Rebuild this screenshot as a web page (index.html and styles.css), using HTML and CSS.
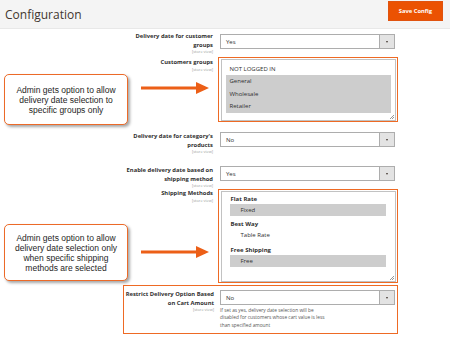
FILE: index.html
```html
<!DOCTYPE html>
<html lang="en">
<head>
    <meta charset="UTF-8">
    <meta name="viewport" content="width=device-width, initial-scale=1.0">
    <title>Configuration</title>
    <link rel="stylesheet" href="styles.css">
</head>
<body>
    <div class="page">
        <header class="page-header">
            <h1>Configuration</h1>
            <button class="btn-save">Save Config</button>
        </header>

        <div class="fields">
            <div class="field field-groups-date">
                <div class="label">Delivery date for customer groups<span class="scope">[store view]</span></div>
                <div class="control">
                    <div class="select">Yes<span class="select-arrow"></span></div>
                </div>
            </div>

            <div class="field field-groups">
                <div class="label">Customers groups<span class="scope">[store view]</span></div>
                <div class="control highlight">
                    <div class="multiselect">
                        <div class="option">NOT LOGGED IN</div>
                        <div class="selected-block">
                            <div class="option">General</div>
                            <div class="option">Wholesale</div>
                            <div class="option">Retailer</div>
                        </div>
                        <span class="resize"></span>
                    </div>
                </div>
            </div>

            <div class="field field-category">
                <div class="label">Delivery date for category's products<span class="scope">[store view]</span></div>
                <div class="control">
                    <div class="select">No<span class="select-arrow"></span></div>
                </div>
            </div>

            <div class="field field-shipping-date">
                <div class="label">Enable delivery date based on shipping method<span class="scope">[store view]</span></div>
                <div class="control">
                    <div class="select">Yes<span class="select-arrow"></span></div>
                </div>
            </div>

            <div class="field field-shipping">
                <div class="label">Shipping Methods<span class="scope">[store view]</span></div>
                <div class="control highlight">
                    <div class="multiselect multiselect-shipping">
                        <div class="optgroup">Flat Rate</div>
                        <div class="option sub selected">Fixed</div>
                        <div class="optgroup">Best Way</div>
                        <div class="option sub">Table Rate</div>
                        <div class="optgroup">Free Shipping</div>
                        <div class="option sub selected">Free</div>
                        <span class="resize"></span>
                    </div>
                </div>
            </div>

            <div class="field field-cart highlight">
                <div class="label">Restrict Delivery Option Based on Cart Amount<span class="scope">[store view]</span></div>
                <div class="control">
                    <div class="select">No<span class="select-arrow"></span></div>
                    <p class="note-text">If set as yes, delivery date selection will be disabled for customers whose cart value is less than specified amount</p>
                </div>
            </div>
        </div>

        <div class="callout callout-groups">Admin gets option to allow delivery date selection to specific groups only</div>
        <svg class="arrow arrow-groups" width="70" height="14" viewBox="0 0 70 14">
            <path d="M0 5.5 H55 V1 L68 7 L55 13 V8.5 H0 Z" fill="#ec5f17"/>
        </svg>

        <div class="callout callout-shipping">Admin gets option to allow delivery date selection only when specific shipping methods are selected</div>
        <svg class="arrow arrow-shipping" width="70" height="14" viewBox="0 0 70 14">
            <path d="M0 5.5 H55 V1 L68 7 L55 13 V8.5 H0 Z" fill="#ec5f17"/>
        </svg>
    </div>
</body>
</html>
```

FILE: styles.css
```css
body {
    margin: 0;
    background: #fff;
    font-family: "Open Sans", "Liberation Sans", sans-serif;
    color: #303030;
}
.page {
    position: relative;
    width: 450px;
    height: 343px;
    overflow: hidden;
}
.page-header {
    height: 29px;
    display: flex;
    align-items: center;
    justify-content: space-between;
    padding: 0 7px 0 5px;
    background: #f4f4f4;
    border-bottom: 1px solid #e8e8e8;
    box-sizing: border-box;
}
.page-header h1 {
    margin: 0;
    font-size: 12px;
    font-weight: 400;
    color: #41362f;
}
.btn-save {
    width: 55px;
    height: 20px;
    margin-top: -6px;
    padding: 0;
    border: 1px solid #e0530f;
    background: #eb5202;
    color: #fff;
    font-family: "Open Sans", sans-serif;
    font-weight: 700;
    font-size: 5.8px;
}

/* form rows */
.field {
    display: grid;
    grid-template-columns: 213px 180px;
    column-gap: 5px;
    align-items: start;
}
.label {
    width: 92px;
    justify-self: end;
    text-align: right;
    font-size: 5.8px;
    font-weight: 700;
    line-height: 8.5px;
    color: #303030;
}
.scope {
    display: block;
    font-size: 3.9px;
    font-weight: 400;
    line-height: 5px;
    color: #9a9a9a;
}
.control {
    padding: 0 3px 0 2px;
}
.select {
    position: relative;
    height: 15px;
    line-height: 14px;
    padding-left: 5px;
    border: 1px solid #adadad;
    box-sizing: border-box;
    font-size: 6px;
    color: #303030;
    background: #fff;
}
.select-arrow {
    position: absolute;
    top: 0;
    right: 0;
    width: 14px;
    height: 13px;
    background: #e3e3e3;
    border-left: 1px solid #adadad;
}
.select-arrow::after {
    content: "";
    position: absolute;
    left: 5.5px;
    top: 5.5px;
    border-left: 1.5px solid transparent;
    border-right: 1.5px solid transparent;
    border-top: 2px solid #41362f;
}

.highlight {
    border: 1.5px solid #ee6a24;
    padding: 0.5px 1.5px;
}
.multiselect {
    position: relative;
    border: 1px solid #c2c2c2;
    background: #fff;
    padding: 3px 4px 0;
    font-size: 6px;
    color: #303030;
}
.option {
    height: 12.5px;
    line-height: 12.5px;
    padding-left: 4px;
}
.selected-block {
    background: #cdcdcd;
}
.resize {
    position: absolute;
    right: 1px;
    bottom: 1px;
    width: 4px;
    height: 4px;
    background: linear-gradient(135deg, transparent 45%, #999 45%, #999 55%, transparent 55%, transparent 75%, #999 75%, #999 85%, transparent 85%);
}
.multiselect-shipping {
    padding: 3px 9px 0 8px;
}
.optgroup {
    height: 9px;
    line-height: 9px;
    font-weight: 700;
    padding-left: 1px;
}
.option.sub {
    height: 12px;
    line-height: 12px;
    padding-left: 11px;
    margin-bottom: 4.5px;
}
.option.selected {
    background: #cdcdcd;
}
.note-text {
    margin: 2px 0 0;
    width: 113px;
    font-size: 4.8px;
    line-height: 7.3px;
    color: #555;
}

/* row spacing */
.field-groups-date {
    margin-top: 5px;
}
.field-groups-date .label {
    margin-top: -2px;
}
.field-groups {
    margin-top: 3px;
}
.field-groups .label {
    margin-top: 1px;
}
.field-groups .multiselect {
    height: 62px;
    box-sizing: border-box;
}
.field-category {
    margin-top: 10px;
}
.field-shipping-date {
    margin-top: 12px;
}
.field-shipping {
    margin-top: 1px;
}
.field-shipping .multiselect {
    height: 91px;
    box-sizing: border-box;
}
.field-cart {
    width: 275px;
    margin: 2px 0 0 123px;
    grid-template-columns: 90px 180px;
    column-gap: 4px;
    padding: 4px 0 4px;
    box-sizing: border-box;
}
.field-cart .label {
    width: 90px;
}
.field-cart .control {
    padding-left: 2px;
    padding-right: 0;
}
.field-cart .select {
    width: 175px;
}

/* annotations */
.callout {
    position: absolute;
    left: 4px;
    width: 124px;
    box-sizing: border-box;
    padding: 0 4px;
    border: 1.5px solid #ec6a28;
    border-radius: 5px;
    background: #fff;
    box-shadow: 2px 2px 3px rgba(0, 0, 0, 0.35);
    display: flex;
    align-items: center;
    justify-content: center;
    text-align: center;
    font-family: "Liberation Sans", Arial, sans-serif;
    font-size: 8.5px;
    line-height: 10px;
    color: #1e1e1e;
}
.callout-groups {
    top: 74px;
    height: 51px;
}
.callout-shipping {
    top: 224px;
    height: 57px;
}
.arrow {
    position: absolute;
    left: 141px;
}
.arrow-groups {
    top: 81px;
}
.arrow-shipping {
    top: 245px;
}
```
